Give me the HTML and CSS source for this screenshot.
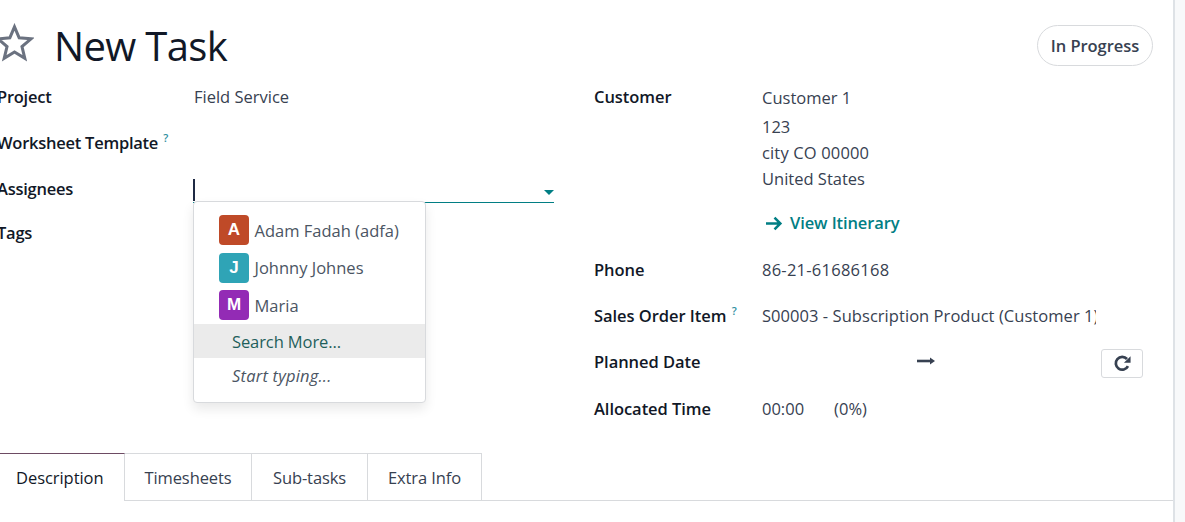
FILE: index.html
```html
<!DOCTYPE html>
<html lang="en">
<head>
<meta charset="utf-8">
<title>New Task</title>
<link rel="stylesheet" href="styles.css">
</head>
<body>
<main class="sheet">
  <header class="head">
    <svg class="star" viewBox="0 0 36 36" width="39" height="39" aria-hidden="true"><path d="M18 3.5l4.3 10.2 11 .9-8.4 7.2 2.6 10.8L18 26.8 8.500 32.600l2.600-10.800-8.400-7.200 11-.9z" fill="none" stroke="#6b7280" stroke-width="2.800" stroke-linejoin="miter"/></svg>
    <h1 class="title">New Task</h1>
    <div class="stage">In Progress</div>
  </header>
  <section class="columns">
    <div class="col col-left">
      <div class="row r-project"><span class="label">Project</span><span class="value project-value">Field Service</span></div>
      <div class="row r-sheet"><span class="label">Worksheet Template <sup class="help">?</sup></span></div>
      <div class="row r-assign"><span class="label">Assignees</span>
        <div class="input"><span class="caret"></span><span class="arrow"></span></div>
      </div>
      <div class="row r-tags"><span class="label">Tags</span></div>
      <div class="menu">
        <div class="opt"><span class="av av-a">A</span><span>Adam Fadah (adfa)</span></div>
        <div class="opt"><span class="av av-j">J</span><span>Johnny Johnes</span></div>
        <div class="opt"><span class="av av-m">M</span><span>Maria</span></div>
        <div class="more">Search More...</div>
        <div class="typing">Start typing...</div>
      </div>
    </div>
    <div class="col col-right">
      <div class="rrow rr-customer"><span class="rlabel">Customer</span>
        <div class="address">
          <div class="a1">Customer 1</div>
          <div>123</div>
          <div class="num">city CO 00000</div>
          <div>United States</div>
          <div class="itin"><svg viewBox="0 0 16 14" width="17" height="15" aria-hidden="true"><path d="M0 7h14M8 1.500l5.500 5.500-5.500 5.500" fill="none" stroke="#017e84" stroke-width="2.400"/></svg>View Itinerary</div>
        </div>
      </div>
      <div class="rrow rr-phone"><span class="rlabel">Phone</span><span class="value num">86-21-61686168</span></div>
      <div class="rrow rr-so"><span class="rlabel">Sales Order Item <sup class="help">?</sup></span><span class="value clip">S00003 - Subscription Product (Customer 1)</span></div>
      <div class="rrow rr-date"><span class="rlabel">Planned Date</span>
        <div class="dates">
          <svg class="darrow" viewBox="0 0 18 10" width="18" height="10" aria-hidden="true"><path d="M0 5h14" stroke="#374151" stroke-width="2.600"/><path d="M13 1.500l5 3.500-5 3.500z" fill="#374151"/></svg>
          <button class="redo" type="button" aria-label="Refresh"><svg viewBox="0 0 16 16" width="19" height="19" aria-hidden="true"><path d="M12.600 10.200A5.400 5.400 0 1 1 11.800 4.200" fill="none" stroke="#374151" stroke-width="2.300"/><path d="M14.800 1.800v5.600H9.200z" fill="#374151"/></svg></button>
        </div>
      </div>
      <div class="rrow rr-time"><span class="rlabel">Allocated Time</span><span class="value">00:00</span><span class="value pct">(0%)</span></div>
    </div>
  </section>
  <nav class="tabs">
    <div class="tab active">Description</div>
    <div class="tab t2">Timesheets</div>
    <div class="tab t3">Sub-tasks</div>
    <div class="tab t4">Extra Info</div>
  </nav>
</main>
<div class="scrollbar"></div>
</body>
</html>
```
FILE: styles.css
```css
* { box-sizing: border-box; }
html, body { margin: 0; height: 522px; overflow: hidden; }
body {
  display: flex;
  background: #fff;
  font-family: "Open Sans", "Noto Sans", sans-serif;
  font-size: 16px;
  color: #374151;
}
.sheet { width: 1173px; flex: none; overflow: hidden; }
.scrollbar { flex: 1; background: #f8f9fa; border-left: 2px solid #dee2e6; }

.head { display: flex; align-items: center; height: 86px; padding: 25px 20px 20px 0; margin-left: -5px; }
.star { flex: none; margin-top: -7px; }
.title { margin: 0 0 0 20px; font-size: 40px; font-weight: 400; line-height: 41px; letter-spacing: -.65px; color: #111827; flex: 1; }
.stage {
  height: 41px; width: 116px; margin-top: -1px;
  border: 1px solid #d8dadd; border-radius: 21px;
  display: flex; align-items: center; justify-content: center;
  font-weight: 600; font-size: 16.500px; letter-spacing: -.05px; color: #374151;
}

.columns { display: flex; height: 367px; }
.col { position: relative; flex: none; }
.col-left { width: 594px; margin-left: -3px; }
.col-right { flex: 1; margin-left: 3px; }

.row { display: flex; align-items: flex-start; }
.label, .rlabel { font-weight: 600; font-size: 16.500px; color: #111827; line-height: 22px; white-space: nowrap; }
.label { width: 196px; flex: none; letter-spacing: -.25px; }
.rlabel { width: 168px; flex: none; letter-spacing: -.05px; }
.value { font-size: 16.500px; letter-spacing: 0; line-height: 22px; color: #374151; white-space: nowrap; }
.project-value { margin-left: 1px; }
.num { letter-spacing: .25px; }
.help { font-size: 11px; font-weight: 600; color: #2f8fa0; line-height: 0; vertical-align: 7px; margin-left: 1px; }

.r-project { height: 46px; }
.r-sheet { height: 46px; }
.r-assign { height: 44px; }
.input { position: relative; width: 361px; height: 26px; margin-top: -1px; border-bottom: 1px solid #017e84; }
.caret { position: absolute; left: 0; top: 2px; width: 2px; height: 22px; background: #1f2a44; }
.arrow { position: absolute; right: 0; bottom: 7px; width: 0; height: 0; border-left: 5px solid transparent; border-right: 5px solid transparent; border-top: 5px solid #017e84; }

.menu {
  position: absolute; left: 196px; top: 115px; width: 233px; height: 202px;
  background: #fff; border: 1px solid #d8dadd; border-radius: 4px;
  box-shadow: 0 6px 12px rgba(0,0,0,.09);
  padding-top: 9.500px;
  font-size: 16.500px; letter-spacing: 0;
  color: #4b5563;
}
.opt { display: flex; align-items: center; gap: 5.500px; height: 37.500px; padding-left: 25px; white-space: nowrap; }
.av {
  width: 30px; height: 30px; border-radius: 4px; flex: none;
  display: flex; align-items: center; justify-content: center;
  color: #fff; font-family: "Liberation Sans", sans-serif; font-size: 17px; font-weight: 700; letter-spacing: 0;
}
.av-a { background: #bf4a28; }
.av-j { background: #2fa4b6; }
.av-m { background: #932bb5; }
.more { height: 34px; line-height: 36px; padding-left: 38px; background: #ebebeb; color: #1f5f5b; letter-spacing: -.1px; }
.typing { height: 34px; line-height: 36px; padding-left: 38px; font-style: italic; color: #4b5563; letter-spacing: .2px; }

.rrow { display: flex; align-items: flex-start; }
.address { font-size: 16.500px; letter-spacing: 0; line-height: 26px; color: #374151; }
.a1 { padding-top: 1px; margin-bottom: 5px; line-height: 22px; }
.address .num { letter-spacing: .15px; }
.itin { display: flex; align-items: center; gap: 7px; margin-top: 20px; margin-left: 4px; font-weight: 600; letter-spacing: -.1px; color: #017e84; line-height: 22px; }
.rr-customer { height: 173px; }
.rr-phone { height: 46px; }
.rr-so { height: 46px; }
.rr-date { height: 47px; }
.rr-time { height: 30px; }
.clip { width: 334px; overflow: hidden; letter-spacing: .05px; }
.dates { display: flex; align-items: flex-start; flex: 1; }
.darrow { margin: 5px 0 0 155px; }
.redo {
  margin: -2px 0 0 166px; width: 42px; height: 29px; padding: 0;
  background: #fff; border: 1px solid #d8dadd; border-radius: 3px;
  display: flex; align-items: center; justify-content: center;
}
.pct { margin-left: 30px; }

.tabs { display: flex; height: 48px; border-bottom: 1px solid #d8dadd; }
.tab {
  height: 47px; display: flex; align-items: center; justify-content: center;
  border: 1px solid #d8dadd; border-left: 0; border-bottom: 0;
  font-size: 16.500px; letter-spacing: -.1px; color: #374151;
  white-space: nowrap;
}
.t2 { width: 127px; }
.t3 { width: 116px; }
.t4 { width: 114px; }
.tab.active {
  width: 125px; justify-content: flex-start; padding-left: 16px;
  height: 48px; background: #fff; letter-spacing: -.05px;
  border-top-color: #6d4b63; color: #111827;
}
```
